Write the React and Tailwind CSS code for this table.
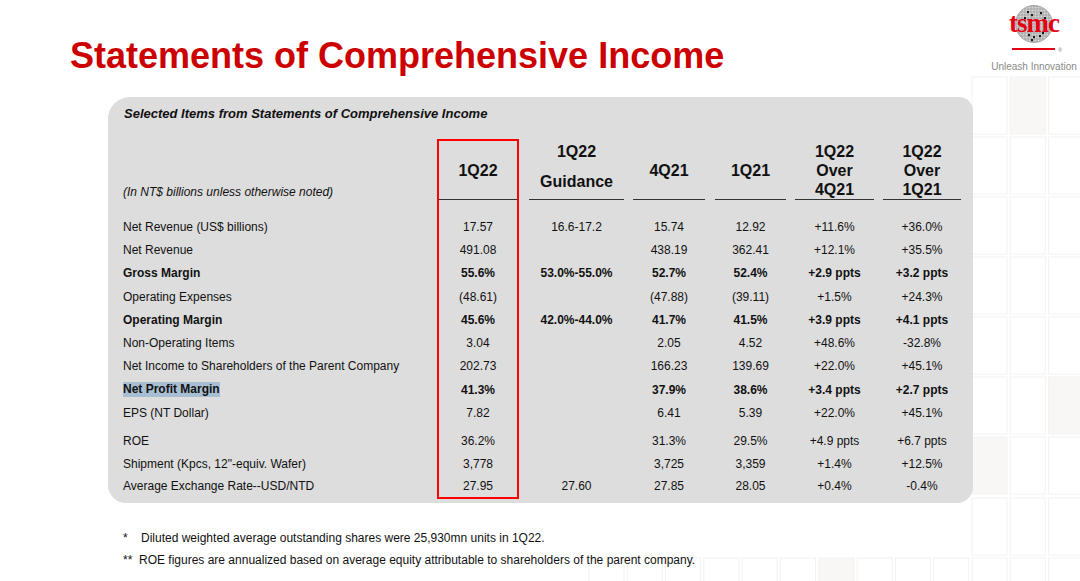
import React from "react";

const labels = [
  ["Net Revenue (US$ billions)", false],
  ["Net Revenue", false],
  ["Gross Margin", true],
  ["Operating Expenses", false],
  ["Operating Margin", true],
  ["Non-Operating Items", false],
  ["Net Income to Shareholders of the Parent Company", false],
  ["Net Profit Margin", true, true],
  ["EPS (NT Dollar)", false],
  ["ROE", false],
  ['Shipment (Kpcs, 12"-equiv. Wafer)', false],
  ["Average Exchange Rate--USD/NTD", false],
];

const bold = [false, false, true, false, true, false, false, true, false, false, false, false];

const cols = [
  {
    key: "q1",
    w: "w-[82px]",
    head: ["1Q22"],
    mode: "center",
    vals: ["17.57", "491.08", "55.6%", "(48.61)", "45.6%", "3.04", "202.73", "41.3%", "7.82", "36.2%", "3,778", "27.95"],
  },
  {
    key: "g",
    w: "w-[95px]",
    head: ["1Q22", "Guidance"],
    mode: "guid",
    vals: ["16.6-17.2", "", "53.0%-55.0%", "", "42.0%-44.0%", "", "", "", "", "", "", "27.60"],
  },
  {
    key: "q4",
    w: "w-[72px]",
    head: ["4Q21"],
    mode: "center",
    vals: ["15.74", "438.19", "52.7%", "(47.88)", "41.7%", "2.05", "166.23", "37.9%", "6.41", "31.3%", "3,725", "27.85"],
  },
  {
    key: "q121",
    w: "w-[71px]",
    head: ["1Q21"],
    mode: "center",
    vals: ["12.92", "362.41", "52.4%", "(39.11)", "41.5%", "4.52", "139.69", "38.6%", "5.39", "29.5%", "3,359", "28.05"],
  },
  {
    key: "o4",
    w: "w-[79px]",
    head: ["1Q22", "Over", "4Q21"],
    mode: "three",
    vals: ["+11.6%", "+12.1%", "+2.9 ppts", "+1.5%", "+3.9 ppts", "+48.6%", "+22.0%", "+3.4 ppts", "+22.0%", "+4.9 ppts", "+1.4%", "+0.4%"],
  },
  {
    key: "o1",
    w: "w-[78px]",
    head: ["1Q22", "Over", "1Q21"],
    mode: "three",
    vals: ["+36.0%", "+35.5%", "+3.2 ppts", "+24.3%", "+4.1 ppts", "-32.8%", "+45.1%", "+2.7 ppts", "+45.1%", "+6.7 ppts", "+12.5%", "-0.4%"],
  },
];

function rowCls(i) {
  if (i === 11) return "h-[21px]";
  if (i === 9) return "h-[23.3px] mt-[4.7px]";
  return "h-[23.3px]";
}

function Header({ c }) {
  if (c.mode === "guid") {
    return (
      <div className="h-[59px] border-b border-[#333] flex items-end justify-center pb-[2px]">
        <div className="text-center leading-[30px]">
          {c.head.map((h) => (
            <div key={h}>{h}</div>
          ))}
        </div>
      </div>
    );
  }
  if (c.mode === "three") {
    return (
      <div className="h-[59px] border-b border-[#333] flex items-end justify-center">
        <div className="text-center leading-[19px]">
          {c.head.map((h, i) => (
            <div key={i}>{h}</div>
          ))}
        </div>
      </div>
    );
  }
  return (
    <div className="h-[59px] border-b border-[#333] flex items-center justify-center">
      <div className="leading-[19px]">{c.head[0]}</div>
    </div>
  );
}

function Background() {
  const rects = [];
  const colX = [];
  for (let x = 589; x < 1090; x += 38.3) colX.push(x);
  const rowY = [77, 137, 197, 257, 317, 377, 437, 498, 558];
  rowY.forEach((y, ri) => {
    colX.forEach((x, ci) => {
      if (y < 500 && x < 970) return;
      const fill = (ri * 3 + ci * 7) % 11 === 0 ? "#f8f7f6" : "#ffffff";
      rects.push(
        <rect key={`${ri}-${ci}`} x={x} y={y} width={35} height={57} fill={fill} stroke="#f4f2f1" strokeWidth="1" />
      );
    });
  });
  return (
    <svg className="absolute inset-0 pointer-events-none" width="1080" height="581" viewBox="0 0 1080 581">
      {rects}
    </svg>
  );
}

function Logo() {
  const lines = [];
  for (let i = -18; i <= 18; i += 3) {
    lines.push(<line key={"v" + i} x1={19 + i} y1="0" x2={19 + i} y2="38" stroke="#8d8d8d" strokeWidth="0.6" />);
    lines.push(<line key={"h" + i} x1="0" y1={19 + i} x2="38" y2={19 + i} stroke="#8d8d8d" strokeWidth="0.6" />);
  }
  const dots = [
    [12, 6], [16, 9], [25, 7], [9, 12], [29, 12], [13, 29], [18, 31], [24, 30], [16, 34], [27, 27],
  ];
  return (
    <div className="w-[88px] flex flex-col items-center pt-[5px] mr-[2px]">
      <div className="relative w-[38px] h-[38px]">
        <svg width="38" height="38" viewBox="0 0 38 38">
          <defs>
            <clipPath id="wafer">
              <circle cx="19" cy="19" r="18.5" />
            </clipPath>
          </defs>
          <circle cx="19" cy="19" r="18.5" fill="#d6d6d6" />
          <g clipPath="url(#wafer)">{lines}</g>
          {dots.map(([x, y], i) => (
            <rect key={i} x={x} y={y} width="2" height="2.2" fill="#1a1a1a" />
          ))}
          <circle cx="19" cy="19" r="18.5" fill="none" stroke="#9a9a9a" strokeWidth="0.8" />
        </svg>
        <div className="absolute left-1/2 top-[3px] -translate-x-1/2 font-['Liberation_Serif',serif] font-bold text-[27px] leading-[30px] text-[#e60012] tracking-[-1px]">
          tsmc
        </div>
      </div>
      <div className="flex items-center mt-[2px] ml-[6px]">
        <div className="w-[43px] h-[2px] bg-[#e60012]" />
        <div className="text-[5px] leading-[5px] text-[#777] ml-[3px] mt-[3px]">®</div>
      </div>
      <div className="mt-[8px] text-[10px] leading-[12px] text-[#8a8a8a] whitespace-nowrap">Unleash Innovation</div>
    </div>
  );
}

export default function App() {
  return (
    <div className="relative w-[1080px] h-[581px] bg-white overflow-hidden font-['Liberation_Sans',Arial,sans-serif] text-[#111]">
      <Background />
      <div className="relative flex flex-col">
        <div className="h-[97px] flex justify-between items-start">
          <h1 className="ml-[70px] mt-[38px] text-[36px] leading-[36px] font-bold text-[#cc0000] whitespace-nowrap">
            Statements of Comprehensive Income
          </h1>
          <Logo />
        </div>

        <div className="ml-[108px] w-[865px] bg-[#dddddd] rounded-tl-[22px] rounded-tr-[14px] rounded-bl-[18px] rounded-br-[16px] pt-[9px] pl-[15px] pr-[11px] pb-[4px]">
          <div className="text-[13px] leading-[15px] font-bold italic ml-[1px] mb-[18px]">
            Selected Items from Statements of Comprehensive Income
          </div>
          <div className="flex items-start">
            <div className="w-[314px] border-y-2 border-transparent">
              <div className="h-[59px] flex items-end pb-[1px]">
                <div className="text-[12px] leading-[14px] italic">(In NT$ billions unless otherwise noted)</div>
              </div>
              <div className="mt-[15px] text-[12px]">
                {labels.map(([t, b, hl], i) => (
                  <div key={i} className={`${rowCls(i)} flex items-center`}>
                    <span className={`${b ? "font-bold" : ""} ${hl ? "bg-[#a8bfd3] leading-[15px]" : ""}`}>{t}</span>
                  </div>
                ))}
              </div>
            </div>
            {cols.map((c, ci) => (
              <div
                key={c.key}
                className={`${c.w} ${ci === 0 ? "border-2 border-[#ff0000]" : "border-y-2 border-transparent"} ${
                  ci === 1 ? "ml-[10px]" : ci === 0 ? "" : ci === 3 ? "ml-[10px]" : "ml-[9px]"
                }`}
              >
                <div className="text-[16px] font-bold">
                  <Header c={c} />
                </div>
                <div className="mt-[15px] text-[12px]">
                  {c.vals.map((v, i) => (
                    <div key={i} className={`${rowCls(i)} flex items-center justify-center whitespace-nowrap ${bold[i] ? "font-bold" : ""}`}>
                      {v}
                    </div>
                  ))}
                </div>
              </div>
            ))}
          </div>
        </div>

        <div className="ml-[123px] mt-[24px] text-[12px] leading-[22px]">
          <div className="flex">
            <span className="w-[18px]">*</span>
            <span>Diluted weighted average outstanding shares were 25,930mn units in 1Q22.</span>
          </div>
          <div className="flex">
            <span className="w-[16px]">**</span>
            <span>ROE figures are annualized based on average equity attributable to shareholders of the parent company.</span>
          </div>
        </div>
      </div>
    </div>
  );
}
